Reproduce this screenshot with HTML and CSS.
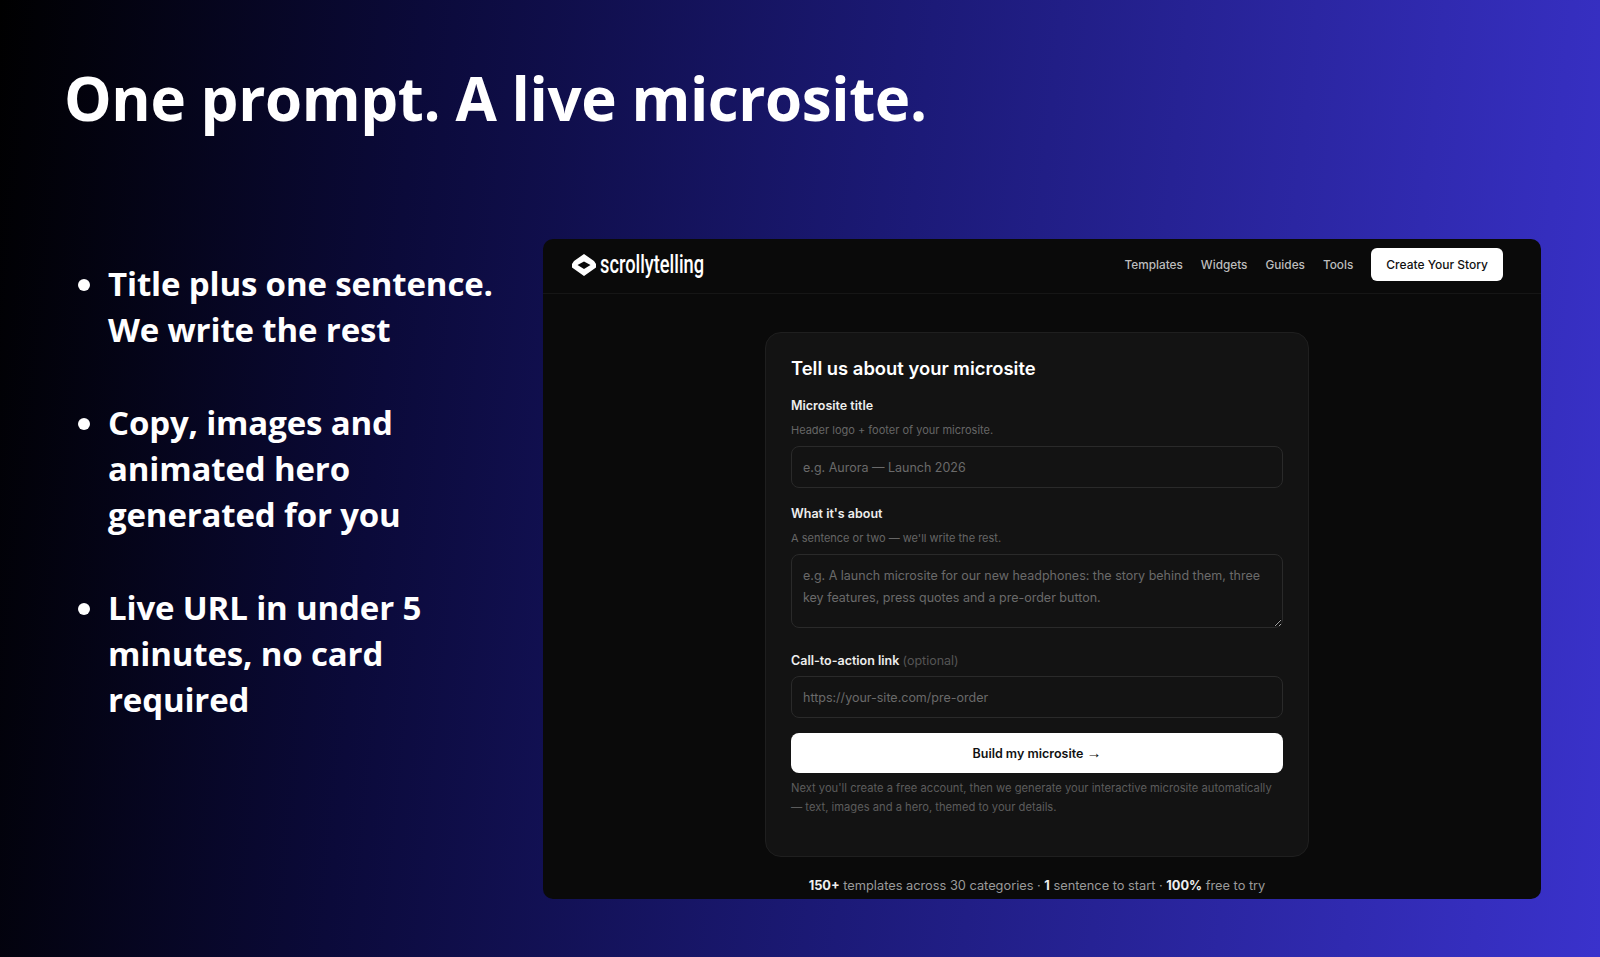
FILE: index.html
```html
<!DOCTYPE html>
<html lang="en">
<head>
  <meta charset="UTF-8">
  <title>One prompt. A live microsite.</title>
  <link rel="stylesheet" href="styles.css">
</head>
<body>
  <div class="slide">
    <h1>One prompt. A live microsite.</h1>

    <div class="content">
      <!-- Bullets -->
      <ul class="points">
        <li>Title plus one sentence.<br>We write the rest</li>
        <li>Copy, images and<br>animated hero<br>generated for you</li>
        <li>Live URL in under 5<br>minutes, no card<br>required</li>
      </ul>

      <!-- App screenshot -->
      <div class="panel">
        <div class="topbar">
          <div class="logo">
            <svg class="logo-icon" viewBox="0 0 24 22" width="24" height="22">
              <path fill-rule="evenodd" d="M12 0 L22 7 L24 10 L24 13.5 L12 22 L0 13.5 L0 10 L2 7 Z M12 7.5 L5.5 11 L12 15 L18.5 11 Z" fill="#fff"/>
            </svg>
            <span class="logo-text">scrollytelling</span>
          </div>
          <nav class="nav">
            <a href="#">Templates</a>
            <a href="#">Widgets</a>
            <a href="#">Guides</a>
            <a href="#">Tools</a>
            <a href="#" class="nav-cta">Create Your Story</a>
          </nav>
        </div>

        <div class="panel-body">
          <form class="card">
            <h2>Tell us about your microsite</h2>

            <label class="field-label">Microsite title</label>
            <div class="hint">Header logo + footer of your microsite.</div>
            <input class="field" type="text" placeholder="e.g. Aurora — Launch 2026">

            <label class="field-label about">What it's about</label>
            <div class="hint">A sentence or two — we'll write the rest.</div>
            <textarea class="field area" placeholder="e.g. A launch microsite for our new headphones: the story behind them, three key features, press quotes and a pre-order button."></textarea>

            <label class="field-label cta">Call-to-action link <span class="optional">(optional)</span></label>
            <input class="field" type="text" placeholder="https://your-site.com/pre-order">

            <button class="build" type="button">Build my microsite <span class="arrow">→</span></button>
            <p class="note">Next you'll create a free account, then we generate your interactive microsite automatically<br>— text, images and a hero, themed to your details.</p>
          </form>

          <div class="stats"><b>150+</b> templates across 30 categories · <b>1</b> sentence to start · <b>100%</b> free to try</div>
        </div>
      </div>
    </div>
  </div>
</body>
</html>
```

FILE: styles.css
```css
/* General Styling */
html, body {
  margin: 0;
  height: 100%;
}

body {
  overflow: hidden;
}

.slide {
  box-sizing: border-box;
  height: 957px;
  padding: 59px 59px 0 64px;
  background: linear-gradient(96deg, #000000 0%, #0b0a3a 25%, #1c1a78 55%, #3a32cc 100%);
  color: #fff;
  font-family: "Open Sans", sans-serif;
}

h1 {
  margin: 0;
  font-size: 60px;
  line-height: 78px;
  font-weight: 700;
  letter-spacing: -0.4px;
}

.content {
  display: flex;
  justify-content: space-between;
  align-items: flex-start;
  margin-top: 102px;
}

/* Bullets */
.points {
  margin: 22px 0 0;
  padding: 0 0 0 44px;
  font-size: 33px;
  line-height: 46px;
  font-weight: 700;
  letter-spacing: -0.15px;
}

.points li {
  margin-bottom: 47px;
}

/* Panel */
.panel {
  width: 998px;
  height: 660px;
  flex-shrink: 0;
  overflow: hidden;
  background: #0a0a0a;
  border-radius: 10px;
  font-family: Inter, sans-serif;
  letter-spacing: normal;
}

.topbar {
  display: flex;
  justify-content: space-between;
  align-items: center;
  height: 55px;
  box-sizing: border-box;
  padding: 0 38px 3px 29px;
  border-bottom: 1px solid #161616;
}

.logo {
  display: flex;
  align-items: center;
  gap: 4px;
}

.logo-text {
  display: inline-block;
  width: 107px;
  font-family: Roboto, sans-serif;
  font-size: 25px;
  font-weight: 500;
  white-space: nowrap;
  transform: scaleX(0.73);
  transform-origin: left center;
}

.nav {
  display: flex;
  align-items: center;
  gap: 18px;
}

.nav a {
  color: #bdbdbd;
  font-size: 11.8px;
  font-weight: 500;
  text-decoration: none;
}

.nav .nav-cta {
  padding: 9px 15px;
  background: #fff;
  color: #111;
  font-size: 12px;
  border-radius: 6px;
}

/* Form card */
.panel-body {
  display: flex;
  flex-direction: column;
  align-items: center;
}

.card {
  box-sizing: border-box;
  width: 544px;
  height: 525px;
  margin: 38px 0 0 -10px;
  padding: 23px 25px 0;
  background: #131313;
  border: 1px solid #1f1f1f;
  border-radius: 16px;
}

.card h2 {
  margin: 0 0 18px;
  font-size: 18.4px;
  line-height: 24px;
  font-weight: 600;
}

.field-label {
  display: block;
  font-size: 12.5px;
  line-height: 16px;
  font-weight: 600;
  color: #eee;
}

.field-label.about {
  margin-top: 18px;
}

.field-label.cta {
  margin-top: 25px;
  margin-bottom: 7px;
}

.optional {
  color: #555;
  font-weight: 400;
}

.hint {
  margin: 9px 0 8px;
  font-size: 11px;
  line-height: 15px;
  color: #666;
}

.field {
  display: block;
  box-sizing: border-box;
  width: 100%;
  height: 42px;
  padding: 0 11px;
  background: #131313;
  border: 1px solid #2a2a2a;
  border-radius: 8px;
  color: #ddd;
  font-family: Inter, sans-serif;
  font-size: 12.5px;
  outline: none;
}

.field::placeholder {
  color: #6a6a6a;
  opacity: 1;
}

.area {
  height: 74px;
  padding: 10px 11px;
  line-height: 21.5px;
}

.build {
  display: block;
  width: 100%;
  height: 40px;
  margin-top: 15px;
  background: #fff;
  border: none;
  border-radius: 8px;
  color: #111;
  font-family: Inter, sans-serif;
  font-size: 12.5px;
  font-weight: 600;
}

.arrow {
  font-family: "Liberation Sans", sans-serif;
  font-size: 15px;
  line-height: 1;
  font-weight: 400;
}

.note {
  margin: 6px 0 0;
  font-size: 11.2px;
  line-height: 19px;
  color: #5c5c5c;
}

.stats {
  margin: 20px 0 0 -10px;
  font-size: 12.8px;
  line-height: 18px;
  color: #9a9a9a;
}

.stats b {
  color: #eee;
  font-weight: 700;
}
```
